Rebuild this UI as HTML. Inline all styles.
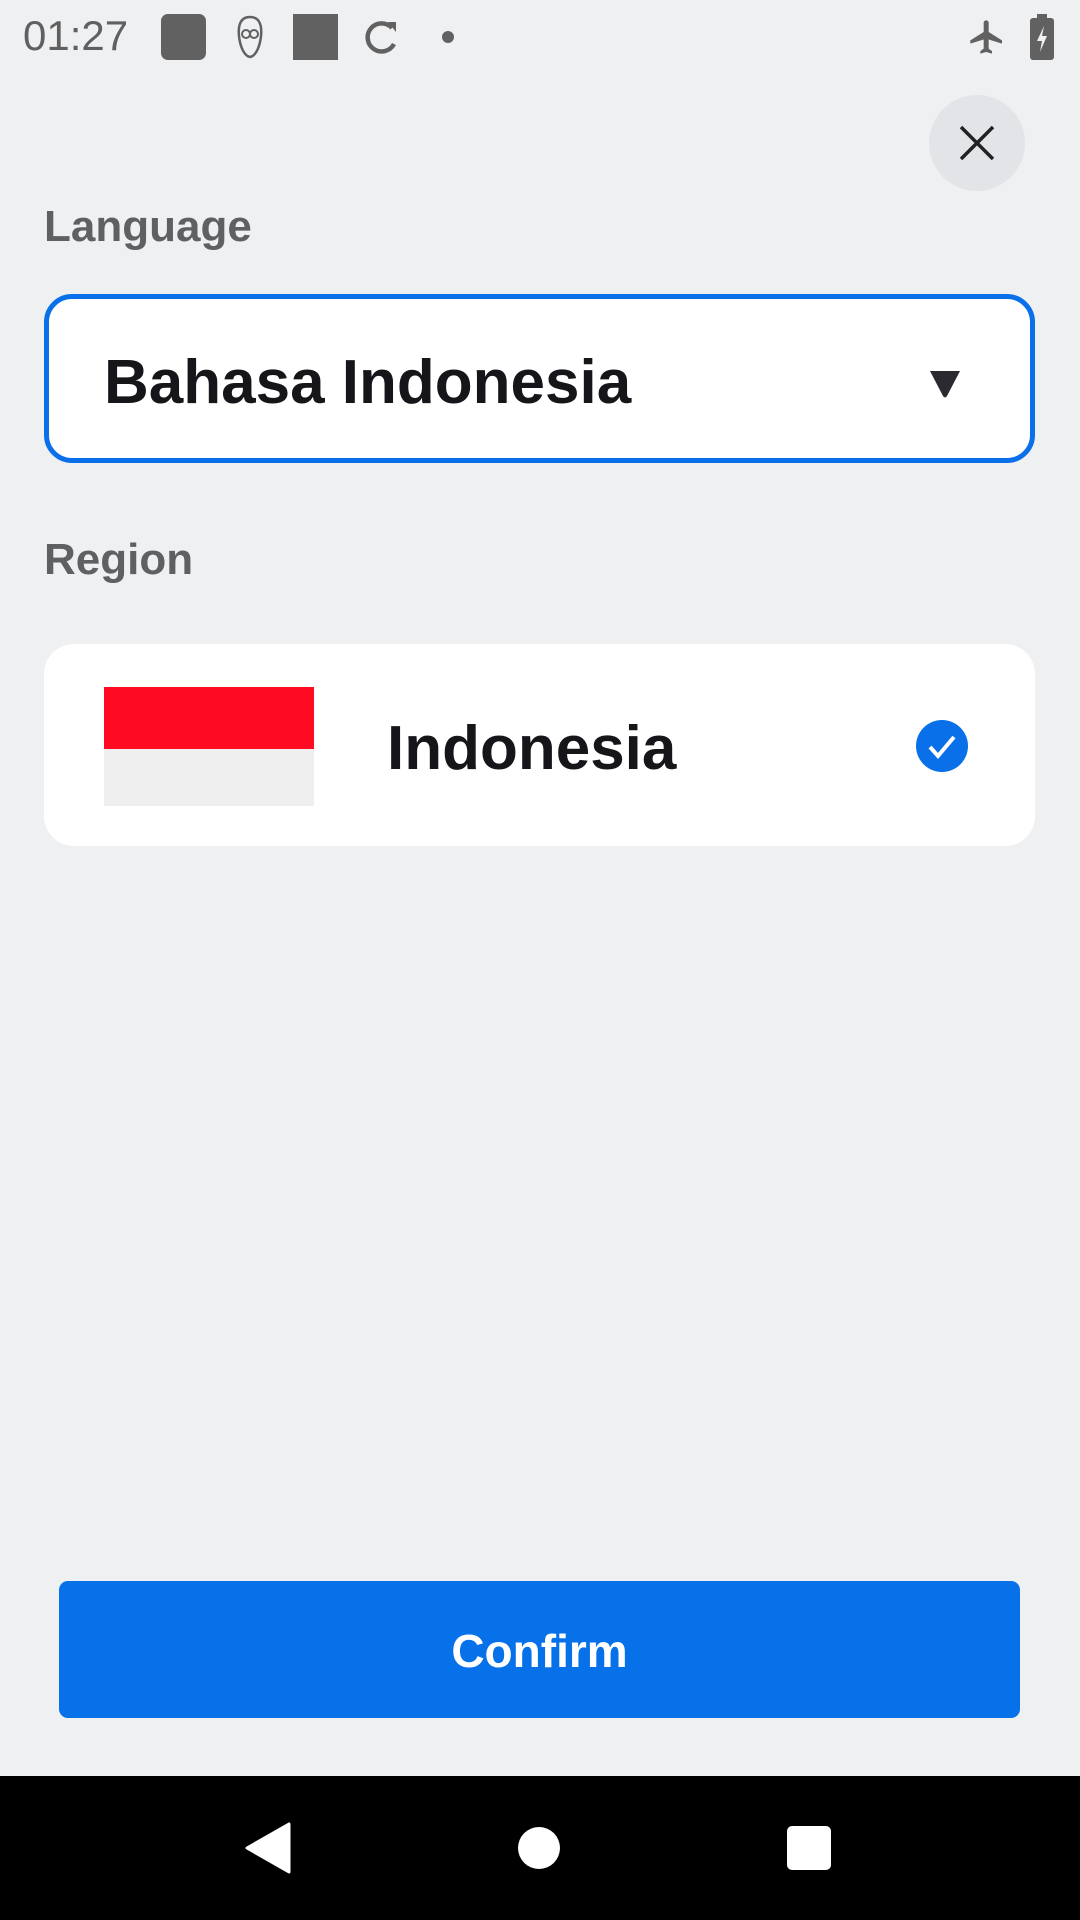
<!DOCTYPE html>
<html><head><meta charset="utf-8"><style>
*{margin:0;padding:0;box-sizing:border-box}
body{width:1080px;height:1920px;background:#eff0f2;font-family:"Liberation Sans",sans-serif;position:relative;overflow:hidden}
.a{position:absolute}
.lbl{color:#5f6063;font-weight:bold;font-size:44px;left:44px}
</style></head><body>
<div class="a" style="left:23px;top:12px;font-size:42px;color:#606060">01:27</div>
<div class="a" style="left:161px;top:14px;width:45px;height:46px;background:#616161;border-radius:7px"></div>
<svg class="a" style="left:234px;top:14px" width="32" height="46" viewBox="0 0 32 46"><path d="M16 3 C6 3 4 12 5 22 C6 32 10 42 16 43 C22 42 26 32 27 22 C28 12 26 3 16 3Z" fill="none" stroke="#616161" stroke-width="2.5"/><circle cx="12" cy="20" r="4" fill="none" stroke="#616161" stroke-width="2"/><circle cx="20" cy="20" r="4" fill="none" stroke="#616161" stroke-width="2"/></svg>
<div class="a" style="left:293px;top:14px;width:45px;height:46px;background:#616161"></div>
<svg class="a" style="left:362px;top:18px" width="40" height="40" viewBox="0 0 40 40"><path d="M30 10 A14 14 0 1 0 32 26" fill="none" stroke="#616161" stroke-width="4.5"/><path d="M26 4 L34 4 L34 14Z" fill="#616161"/></svg>
<div class="a" style="left:442px;top:31px;width:12px;height:12px;border-radius:50%;background:#616161"></div>
<svg class="a" style="left:967px;top:15px" width="40" height="44" viewBox="0 0 24 24"><path fill="#616161" d="M21 16v-2l-8-5V3.5c0-.83-.67-1.5-1.5-1.5S10 2.67 10 3.5V9l-8 5v2l8-2.5V19l-2 1.5V22l3.5-1 3.5 1v-1.5L13 19v-5.5l8 2.5z"/></svg>
<svg class="a" style="left:1030px;top:14px" width="24" height="46" viewBox="0 0 24 46"><rect x="0" y="4" width="24" height="42" rx="3" fill="#616161"/><rect x="7" y="0" width="10" height="6" fill="#616161"/><path d="M14 12 L7 27 L12 27 L10 38 L17 22 L12 22Z" fill="#eff0f2"/></svg>

<div class="a" style="left:929px;top:95px;width:96px;height:96px;border-radius:50%;background:#e3e4e8"></div>
<svg class="a" style="left:957px;top:123px" width="40" height="40" viewBox="0 0 40 40"><path d="M4 4L36 36M36 4L4 36" stroke="#222" stroke-width="3.5"/></svg>

<div class="a lbl" style="top:202px">Language</div>
<div class="a" style="left:44px;top:294px;width:991px;height:169px;background:#fff;border:5px solid #0a70ea;border-radius:28px"></div>
<div class="a" style="left:104px;top:347px;font-size:62px;font-weight:bold;color:#16161a">Bahasa Indonesia</div>
<svg class="a" style="left:928px;top:369px" width="34" height="30" viewBox="0 0 34 30"><path d="M2 2 L32 2 L19 27 Q17 30 15 27Z" fill="#2b2a30"/></svg>

<div class="a lbl" style="top:535px">Region</div>
<div class="a" style="left:44px;top:644px;width:991px;height:202px;background:#fff;border-radius:30px"></div>
<div class="a" style="left:104px;top:687px;width:210px;height:62px;background:#ff0a23"></div>
<div class="a" style="left:104px;top:749px;width:210px;height:57px;background:#efefef"></div>
<div class="a" style="left:387px;top:713px;font-size:62px;font-weight:bold;color:#16161a">Indonesia</div>
<svg class="a" style="left:916px;top:720px" width="52" height="52" viewBox="0 0 52 52"><circle cx="26" cy="26" r="26" fill="#0a70ea"/><path d="M14 27 L22 36 L38 17" fill="none" stroke="#fff" stroke-width="4"/></svg>

<div class="a" style="left:59px;top:1581px;width:961px;height:137px;background:#0771ea;border-radius:9px;color:#fff;font-weight:bold;font-size:46px;text-align:center;line-height:140px">Confirm</div>

<div class="a" style="left:0;top:1776px;width:1080px;height:144px;background:#000"></div>
<svg class="a" style="left:243px;top:1822px" width="48" height="52" viewBox="0 0 48 52"><path d="M46 2 L46 50 L4 26Z" fill="#fff" stroke="#fff" stroke-width="3" stroke-linejoin="round"/></svg>
<div class="a" style="left:518px;top:1827px;width:42px;height:42px;border-radius:50%;background:#fff"></div>
<div class="a" style="left:787px;top:1826px;width:44px;height:44px;border-radius:5px;background:#fff"></div>
</body></html>
